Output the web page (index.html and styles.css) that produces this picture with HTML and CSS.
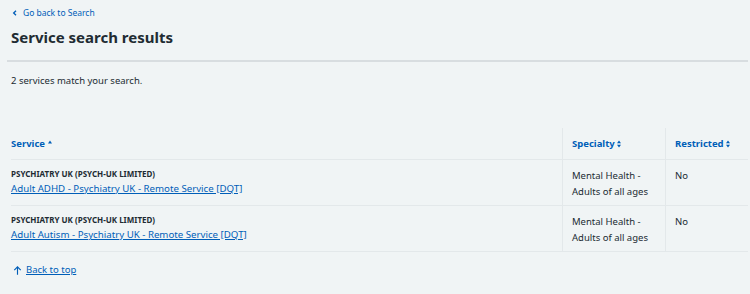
FILE: index.html
```html
<!DOCTYPE html>
<html lang="en">
<head>
    <meta charset="UTF-8">
    <title>Service search results</title>
    <link rel="stylesheet" href="styles.css">
</head>
<body>
    <div class="container">
        <a class="back-link" href="#">
            <svg class="back-icon" viewBox="0 0 24 24" width="8" height="8"><path d="M15 5l-7 7 7 7" fill="none" stroke="currentColor" stroke-width="4"/></svg>
            Go back to Search
        </a>
        <h1>Service search results</h1>
        <hr class="rule">
        <p class="count">2 services match your search.</p>

        <table class="results">
            <thead>
                <tr>
                    <th class="col-service"><a href="#">Service <svg class="sort" viewBox="0 0 4 4" width="4" height="4"><path d="M0 3.5L2 0.5L4 3.5z" fill="currentColor"/></svg></a></th>
                    <th class="col-specialty"><a href="#">Specialty <svg class="sort-both" viewBox="0 0 4 8" width="4" height="8"><path d="M0 3.2L2 0.5L4 3.2zM0 4.8L2 7.5L4 4.8z" fill="currentColor"/></svg></a></th>
                    <th class="col-restricted"><a href="#">Restricted <svg class="sort-both" viewBox="0 0 4 8" width="4" height="8"><path d="M0 3.2L2 0.5L4 3.2zM0 4.8L2 7.5L4 4.8z" fill="currentColor"/></svg></a></th>
                </tr>
            </thead>
            <tbody>
                <tr>
                    <td>
                        <div class="org">PSYCHIATRY UK (PSYCH-UK LIMITED)</div>
                        <a href="#">Adult ADHD - Psychiatry UK - Remote Service [DQT]</a>
                    </td>
                    <td>Mental Health - Adults of all ages</td>
                    <td>No</td>
                </tr>
                <tr>
                    <td>
                        <div class="org">PSYCHIATRY UK (PSYCH-UK LIMITED)</div>
                        <a href="#">Adult Autism - Psychiatry UK - Remote Service [DQT]</a>
                    </td>
                    <td>Mental Health - Adults of all ages</td>
                    <td>No</td>
                </tr>
            </tbody>
        </table>

        <a class="top-link" href="#">
            <svg class="top-icon" viewBox="0 0 24 24" width="11" height="11"><path d="M12 21V4M5 11l7-7 7 7" fill="none" stroke="currentColor" stroke-width="2.5"/></svg>
            <span>Back to top</span>
        </a>
    </div>
</body>
</html>
```

FILE: styles.css
```css
body {
    margin: 0;
    background: #f0f4f5;
    color: #212b32;
    font-family: "Noto Sans", "Open Sans", sans-serif;
    font-size: 10px;
}
a {
    color: #005eb8;
}
.container {
    padding: 5px 2px 0 11px;
}
.back-link {
    display: inline-flex;
    align-items: center;
    gap: 4px;
    text-decoration: none;
    font-size: 8.5px;
    line-height: 16px;
}
h1 {
    margin: 5px 0 0;
    font-size: 15px;
    line-height: 22px;
    font-weight: 700;
}
.rule {
    margin: 12px 0 0 -4px;
    border: 0;
    height: 2px;
    background: #d8dde0;
}
.count {
    margin: 11px 0 0;
    font-size: 9.5px;
    line-height: 16px;
}

/* results table */
.results {
    width: 100%;
    margin-top: 39px;
    border-collapse: collapse;
}
.results th,
.results td {
    text-align: left;
    vertical-align: top;
    border-bottom: 1px solid #e3e8ea;
    padding: 8px 9px;
}
.results th {
    padding: 9px 9px 8px;
    line-height: 14px;
    font-size: 9.5px;
}
.results th a {
    text-decoration: none;
    font-weight: 700;
}
.results th.col-service,
.results td:first-child {
    padding-left: 0;
}
.col-specialty,
.col-restricted,
.results td + td {
    border-left: 1px solid #e3e8ea;
}
.col-specialty { width: 84px; }
.col-restricted { width: 64px; }
.sort {
    margin-left: 1px;
    vertical-align: 3px;
}
.sort-both {
    vertical-align: -1px;
}
.results td {
    line-height: 16px;
    font-size: 9.5px;
    padding-top: 8px;
    padding-bottom: 5px;
}
.results td:first-child {
    padding-top: 6px;
}
.org {
    font-size: 8px;
    font-weight: 700;
    line-height: 14px;
    margin-top: 1px;
}
.results td a {
    font-size: 9.7px;
}
.top-link {
    display: inline-flex;
    align-items: center;
    gap: 3px;
    margin-top: 10px;
    margin-left: 1px;
    font-size: 9.5px;
    line-height: 16px;
    text-decoration: none;
}
.top-link span {
    text-decoration: underline;
}
```
